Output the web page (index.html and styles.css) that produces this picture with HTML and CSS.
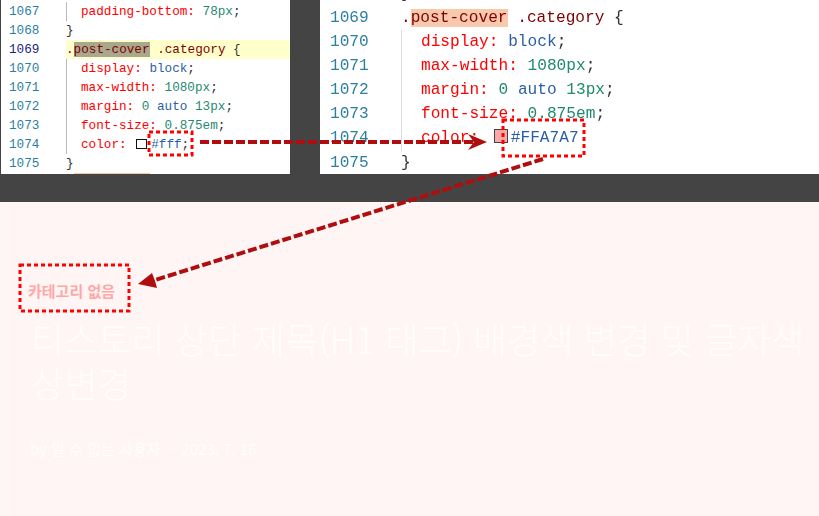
FILE: index.html
```html
<!DOCTYPE html>
<html lang="ko">
<head>
<meta charset="utf-8">
<title>티스토리 상단 제목 배경색 변경</title>
<link rel="stylesheet" href="styles.css">
</head>
<body>
<div class="page">
  <section class="shots">
    <div class="editor editor-small">
      <div class="row"><span class="num">1067</span><span class="code guide"><span class="ind"></span><span class="p">padding-bottom:</span> <span class="n">78px</span>;</span></div>
      <div class="row"><span class="num">1068</span><span class="code">}</span></div>
      <div class="row row-active"><span class="num num-active">1069</span><span class="code"><span class="s">.<span class="hl-old">post-cover</span> .category</span> {</span></div>
      <div class="row"><span class="num">1070</span><span class="code guide"><span class="ind"></span><span class="p">display:</span> <span class="v">block</span>;</span></div>
      <div class="row"><span class="num">1071</span><span class="code guide"><span class="ind"></span><span class="p">max-width:</span> <span class="n">1080px</span>;</span></div>
      <div class="row"><span class="num">1072</span><span class="code guide"><span class="ind"></span><span class="p">margin:</span> <span class="n">0</span> <span class="v">auto</span> <span class="n">13px</span>;</span></div>
      <div class="row"><span class="num">1073</span><span class="code guide"><span class="ind"></span><span class="p">font-size:</span> <span class="n">0.875em</span>;</span></div>
      <div class="row"><span class="num">1074</span><span class="code guide"><span class="ind"></span><span class="p">color:</span> <span class="swatch swatch-white"></span><span class="v">#fff</span>;</span></div>
      <div class="row"><span class="num">1075</span><span class="code">}</span></div>
      <div class="row"><span class="num"></span><span class="code"><span class="hl-next"></span></span></div>
    </div>
    <div class="editor editor-large">
      <div class="row row-clipped"><span class="num"></span><span class="code">}</span></div>
      <div class="row"><span class="num">1069</span><span class="code"><span class="s">.<span class="hl-new">post-cover</span> .category</span> {</span></div>
      <div class="row"><span class="num">1070</span><span class="code guide"><span class="ind"></span><span class="p">display:</span> <span class="v">block</span>;</span></div>
      <div class="row"><span class="num">1071</span><span class="code guide"><span class="ind"></span><span class="p">max-width:</span> <span class="n">1080px</span>;</span></div>
      <div class="row"><span class="num">1072</span><span class="code guide"><span class="ind"></span><span class="p">margin:</span> <span class="n">0</span> <span class="v">auto</span> <span class="n">13px</span>;</span></div>
      <div class="row"><span class="num">1073</span><span class="code guide"><span class="ind"></span><span class="p">font-size:</span> <span class="n">0.875em</span>;</span></div>
      <div class="row"><span class="num">1074</span><span class="code guide"><span class="ind"></span><span class="p">color:</span> <span class="swatch swatch-pink"></span><span class="v">#FFA7A7</span></span></div>
      <div class="row"><span class="num">1075</span><span class="code">}</span></div>
    </div>
  </section>
  <section class="cover">
    <p class="category">카테고리 없음</p>
    <h1 class="title">티스토리 상단 제목(H1 태그) 배경색 변경 및 글자색 상변경</h1>
    <p class="meta">by 알 수 없는 사용자 &nbsp;·&nbsp; 2023. 7. 16.</p>
  </section>
  <svg class="marks" width="819" height="516" viewBox="0 0 819 516" aria-hidden="true">
    <g class="box">
      <rect x="149" y="132" width="43" height="23"/>
      <rect x="503" y="120" width="81" height="36"/>
      <rect x="20" y="265" width="109" height="46"/>
    </g>
    <g class="line">
      <path d="M200 142H474"/>
      <path d="M543 159L155 280"/>
    </g>
    <g class="head">
      <path d="M487 142L468 134L474 142L468 150Z"/>
      <path d="M138 284L152 273L155 281L157 288Z"/>
    </g>
  </svg>
</div>
</body>
</html>
```
FILE: styles.css
```css
* { box-sizing: border-box; }
html, body { margin: 0; padding: 0; }
body { background: #fff5f4; overflow: hidden; }
.page { position: relative; width: 819px; height: 516px; overflow: hidden; }

.shots {
  display: flex;
  height: 202px;
  padding: 0 0 28px 1px;
  gap: 30px;
  background: #444;
}
.editor {
  height: 174px;
  overflow: hidden;
  background: #fff;
  font-family: "Liberation Mono", "DejaVu Sans Mono", monospace;
  color: #333;
}
.editor-small {
  width: 289px;
  padding-top: 2px;
  font-size: 12.67px;
  line-height: 19px;
}
.editor-large {
  flex: 1;
  font-size: 16.15px;
  line-height: 24.1px;
  filter: blur(0.45px);
}
.row { display: flex; white-space: pre; height: 19px; }
.editor-large .row { height: 24.1px; }
.row-clipped { margin-top: -18.1px; }
.row-active { background: #ffffcc; margin-left: 65px; }
.row-active .num { margin-left: -65px; background: #fff; }
.num { color: #2b7f9f; }
.num-active { color: #23237e; }
.editor-small .num { width: 65px; padding-left: 8px; flex: none; }
.editor-large .num { width: 81px; padding-left: 10px; flex: none; }
.code { position: relative; flex: 1; }
.guide { display: block; }
.ind { display: inline-block; width: 15px; height: 100%; vertical-align: top; border-left: 1px solid #b9b9b9; }
.editor-large .ind { width: 20px; border-left: 1px solid #dcdcdc; }
.s { color: #800000; }
.p { color: #ff0000; }
.v { color: #2a5fa5; }
.n { color: #1f8a70; }
.hl-old { background: #a8a88e; }
.hl-next { display: block; width: 76px; height: 19px; margin-left: 8px; background: #f6c6aa; }
.hl-new { background: #f9c9ad; }
.swatch {
  display: inline-block;
  vertical-align: -1px;
  border: 1px solid #111;
}
.swatch-white { width: 11px; height: 10px; margin: 0 4px 0 2px; background: #fff; }
.swatch-pink { width: 14px; height: 14px; margin: 0 3px 0 5px; background: #ffa7a7; border: 1.5px solid #444; }

.cover {
  height: 314px;
  padding: 79px 8px 0 29px;
  border-left: 2px solid #fbf7f7;
  font-family: "Noto Sans CJK KR", "Noto Sans", sans-serif;
  color: #fff;
}
.category {
  margin: 0 0 16px -3px;
  font-size: 15px;
  line-height: 19px;
  font-weight: 700;
  color: #ffa7a7;
}
.title {
  margin: 0;
  font-size: 36.3px;
  line-height: 44px;
  font-weight: 300;
  color: #fffdfd;
}
.meta {
  margin: 35px 0 0 -1px;
  font-size: 15px;
  line-height: 20px;
  color: #fffdfd;
}

.marks { position: absolute; left: 0; top: 0; pointer-events: none; }
.box rect { fill: none; stroke: #ff0000; stroke-width: 3; stroke-dasharray: 4 3; }
.line path { fill: none; stroke: #b00e0e; stroke-width: 4; stroke-dasharray: 9 3; }
.head path { fill: #b00e0e; }
```
